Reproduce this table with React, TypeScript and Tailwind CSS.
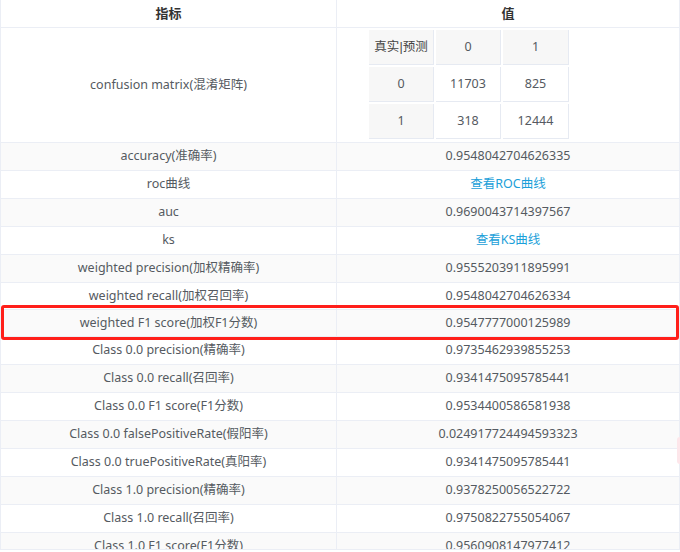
import React from 'react';

const rows: { name: string; value: string; link?: boolean; h?: string }[] = [
  { name: 'accuracy(准确率)', value: '0.9548042704626335' },
  { name: 'roc曲线', value: '查看ROC曲线', link: true },
  { name: 'auc', value: '0.9690043714397567' },
  { name: 'ks', value: '查看KS曲线', link: true },
  { name: 'weighted precision(加权精确率)', value: '0.9555203911895991' },
  { name: 'weighted recall(加权召回率)', value: '0.9548042704626334', h: 'h-[27px]' },
  { name: 'weighted F1 score(加权F1分数)', value: '0.9547777000125989', h: 'h-[27px]' },
  { name: 'Class 0.0 precision(精确率)', value: '0.9735462939855253' },
  { name: 'Class 0.0 recall(召回率)', value: '0.9341475095785441' },
  { name: 'Class 0.0 F1 score(F1分数)', value: '0.9534400586581938' },
  { name: 'Class 0.0 falsePositiveRate(假阳率)', value: '0.024917724494593323' },
  { name: 'Class 0.0 truePositiveRate(真阳率)', value: '0.9341475095785441' },
  { name: 'Class 1.0 precision(精确率)', value: '0.9378250056522722' },
  { name: 'Class 1.0 recall(召回率)', value: '0.9750822755054067' },
  { name: 'Class 1.0 F1 score(F1分数)', value: '0.9560908147977412' },
];

const matrix = [
  ['真实|预测', '0', '1'],
  ['0', '11703', '825'],
  ['1', '318', '12444'],
];

function MatrixCell({ text, head, w }: { text: string; head: boolean; w: string }) {
  const parts = text.split('|');
  return (
    <div
      className={`${w} h-[35px] flex items-center justify-center border-r border-b border-[#e6eaf2] ${
        head ? 'bg-[#f7f7f7]' : 'bg-white'
      }`}
    >
      {parts.length > 1 ? (
        <span className="text-[#444]">
          {parts[0]}
          <span style={{ fontFamily: '"Liberation Sans", sans-serif' }}>|</span>
          {parts[1]}
        </span>
      ) : (
        text
      )}
    </div>
  );
}

export default function App() {
  return (
    <div
      className="relative w-[680px] h-[552px] bg-white text-[12.5px] text-[#555a61]"
      style={{ fontFamily: '"Noto Sans", "Noto Sans CJK SC", sans-serif' }}
    >
      <div className="h-[550px] overflow-hidden border-l border-r border-b border-[#ebeef5]">
        {/* header */}
        <div className="flex h-[28px] border-b border-[#ebeef5] font-bold text-[13px] text-[#333]">
          <div className="w-[336px] flex items-center justify-center border-r border-[#ebeef5]">指标</div>
          <div className="flex-1 flex items-center justify-center">值</div>
        </div>

        {/* confusion matrix */}
        <div className="flex border-b border-[#ebeef5]">
          <div className="w-[336px] flex items-center justify-center border-r border-[#ebeef5]">
            confusion matrix(混淆矩阵)
          </div>
          <div className="flex-1 pl-[32px] pt-[2px] flex flex-col gap-[2px]">
            {matrix.map((r, i) => (
              <div key={i} className="flex gap-[2px]">
                {r.map((c, j) => (
                  <MatrixCell
                    key={j}
                    text={c}
                    head={i === 0 || j === 0}
                    w={j === 2 ? 'w-[66px]' : 'w-[65px]'}
                  />
                ))}
              </div>
            ))}
            <div className="h-[1px]" />
          </div>
        </div>

        {rows.map((r, i) => (
          <div
            key={r.name}
            className={`flex ${r.h ?? 'h-[28px]'} shrink-0 border-b border-[#ebeef5] ${
              i % 2 === 0 ? 'bg-[#fafafa]' : 'bg-white'
            }`}
          >
            <div className="w-[336px] flex items-center justify-center border-r border-[#ebeef5] whitespace-nowrap">
              {r.name}
            </div>
            <div className={`flex-1 flex items-center justify-center ${r.link ? 'text-[#1c9fd9]' : ''}`}>
              {r.value}
            </div>
          </div>
        ))}
      </div>

      {/* highlight annotation */}
      <div className="absolute left-[1px] top-[305px] w-[678px] h-[35px] border-[3px] border-[#ff1f1a] rounded-[3px]" />
      <div className="absolute left-[677px] top-[437px] w-[3px] h-[27px] bg-[#fde6ea] rounded-l" />
    </div>
  );
}
